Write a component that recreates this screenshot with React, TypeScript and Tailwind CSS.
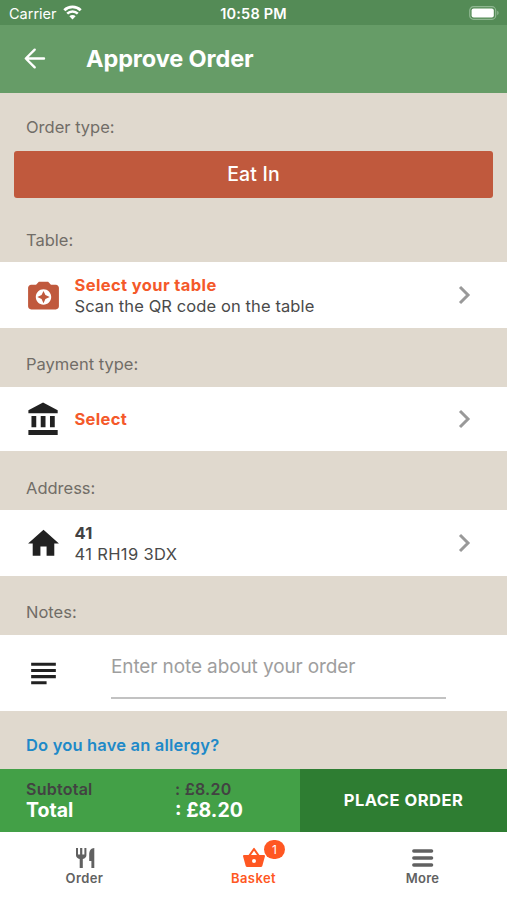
import type { ReactNode } from "react";
import { MdCameraEnhance, MdHome, MdSubject } from "react-icons/md";

function StatusBar() {
    return (
        <div className="relative flex h-[25px] items-center justify-between bg-[#548b56] pl-[9px] pr-[7px] pt-[2px] text-white">
            <div className="flex items-center gap-[6px]">
                <span className="text-[14.5px] leading-5">Carrier</span>
                <svg width="19" height="15" viewBox="0 0 19 15" fill="none" className="mb-[2px]">
                    <path d="M1.3 5.2a11.7 11.7 0 0 1 16.4 0" stroke="white" strokeWidth="2.8" />
                    <path d="M4.2 8.6a7.6 7.6 0 0 1 10.6 0" stroke="white" strokeWidth="2.6" />
                    <path d="M9.5 14.4 6.4 11.2a4.4 4.4 0 0 1 6.2 0z" fill="white" />
                </svg>
            </div>
            <span className="absolute left-0 w-full text-center text-[14.5px] leading-5 font-semibold tracking-[0.2px]">10:58 PM</span>
            <svg width="31" height="14" viewBox="0 0 31 14" fill="none" className="mb-px">
                <rect x="0.7" y="0.7" width="26" height="12.6" rx="3.8" stroke="#8fb791" strokeWidth="1.2" />
                <rect x="2.6" y="2.5" width="22.2" height="9" rx="2" fill="white" />
                <path d="M28.2 4.8v4.4a2.4 2.4 0 0 0 0-4.4z" fill="#8fb791" />
            </svg>
        </div>
    );
}

function Header() {
    return (
        <header className="flex h-[68px] items-center bg-[#669c67] pl-[24px] text-white">
            <svg width="22" height="21" viewBox="0 0 22 21" fill="none" stroke="white" strokeWidth="2.4" strokeLinecap="round" strokeLinejoin="round" className="mb-[2px]">
                <path d="M20 10.5H2M10.7 1.7 1.8 10.5l8.9 8.8" />
            </svg>
            <h1 className="ml-[40px] text-[23.5px] leading-8 font-bold tracking-[-0.1px]">Approve Order</h1>
        </header>
    );
}

function SectionLabel({ children }: { children: ReactNode }) {
    return <div className="pl-[26px] text-[16.5px] leading-6 text-[#716d67]">{children}</div>;
}

function Chevron() {
    return (
        <svg width="13" height="20" viewBox="0 0 13 20" fill="none" className="ml-auto mr-[36px]">
            <path d="m2 2 8 8-8 8" stroke="#999" strokeWidth="3" />
        </svg>
    );
}

function Row({ icon, children }: { icon: ReactNode; children: ReactNode }) {
    return (
        <div className="flex h-full items-center pl-[25px]">
            <div className="w-[37px] shrink-0">{icon}</div>
            <div className="ml-[12.5px] text-[16.5px] leading-[21px]">{children}</div>
            <Chevron />
        </div>
    );
}

function BankIcon() {
    return (
        <svg width="37" height="37" viewBox="0 0 24 24" fill="#212121">
            <path d="M11.7 1 2.2 6v2h19V6zM4.2 9.8h3.1v7.3H4.2zM10.2 9.8h3.1v7.3h-3.1zM16.2 9.8h3.1v7.3h-3.1zM2.2 18.8h19V22h-19z" />
        </svg>
    );
}

function CutleryIcon() {
    return (
        <svg width="24" height="24" viewBox="0 0 24 24" fill="currentColor">
            <path d="M3 2h2v6.5h2.1V2h2.2v6.5h2.1V2h2v7.2c0 1.9-1.2 3.1-3.6 3.7V22H6.7v-9.1C4.300 12.300 3 11.100 3 9.200z" />
            <path d="M21.300 2v20h-2.900v-7h-2.200V8.500C16.200 4.800 18 2 21.300 2z" />
        </svg>
    );
}

function BasketIcon() {
    return (
        <svg width="24" height="24" viewBox="0 0 24 24" fill="currentColor">
            <path d="M5.5 21c-.78 0-1.46-.45-1.79-1.1L1.1 10.44 1 10a1 1 0 0 1 1-1h4.58l4.6-6.57a1 1 0 0 1 1.65.01L17.42 9H22a1 1 0 0 1 1 1l-.04.29-2.67 9.61c-.33.65-1.01 1.1-1.79 1.1zM12 4.74 9 9h6zM12 13a2 2 0 1 0 0 4 2 2 0 0 0 0-4z" />
        </svg>
    );
}

function TabBar() {
    return (
        <nav className="grid h-[68px] grid-cols-3 bg-white pt-[14px] text-[13px] leading-4 font-semibold text-[#616161]">
            <div className="flex flex-col items-center">
                <CutleryIcon />
                <span className="tracking-[0.4px]">Order</span>
            </div>
            <div className="relative flex flex-col items-center text-[#ff5722]">
                <BasketIcon />
                <span className="tracking-[0.4px]">Basket</span>
                <span className="absolute left-[95px] -top-[6px] flex h-[19px] w-[21px] items-center justify-center rounded-full bg-[#ff5722] text-[12px] font-normal text-white">
                    1
                </span>
            </div>
            <div className="flex flex-col items-center">
                <svg width="24" height="24" viewBox="0 0 24 24" stroke="currentColor" strokeWidth="3.4" strokeLinecap="round">
                    <path d="M2.8 5h17.800M2.8 12h17.800M2.8 19h17.800" />
                </svg>
                <span className="tracking-[0.2px]">More</span>
            </div>
        </nav>
    );
}

export default function App() {
    return (
        <div className="flex h-[900px] w-[507px] flex-col overflow-hidden bg-[#e0d9ce] font-['Inter',sans-serif]">
            <StatusBar />
            <Header />
            <main className="flex h-[676px] flex-col">
                <div className="pt-[22px]">
                    <SectionLabel>Order type:</SectionLabel>
                </div>
                <button className="mx-[14px] mt-3 h-[47px] shrink-0 rounded-[3px] bg-[#c0593d] pt-px text-[19.5px] font-medium tracking-[0.15px] text-white">
                    Eat In
                </button>
                <div className="flex h-[64px] items-center pt-[19px]">
                    <SectionLabel>Table:</SectionLabel>
                </div>
                <div className="h-[66px] bg-white">
                    <Row icon={<MdCameraEnhance size={37} color="#c0593d" />}>
                        <p className="pt-px font-bold tracking-[0.38px] text-[#f4592a]">Select your table</p>
                        <p className="tracking-[0.1px] text-[#4a4a4a]">Scan the QR code on the table</p>
                    </Row>
                </div>
                <div className="flex h-[59px] items-center pt-[13px]">
                    <SectionLabel>Payment type:</SectionLabel>
                </div>
                <div className="h-[64px] bg-white">
                    <Row icon={<BankIcon />}>
                        <p className="font-bold tracking-[0.3px] text-[#f4592a]">Select</p>
                    </Row>
                </div>
                <div className="flex h-[59px] items-center pt-[14px]">
                    <SectionLabel>Address:</SectionLabel>
                </div>
                <div className="h-[66px] bg-white">
                    <Row icon={<MdHome size={37} color="#212121" />}>
                        <p className="pt-px font-bold tracking-[0.3px] text-[#424242]">41</p>
                        <p className="tracking-[0.35px] text-[#4a4a4a]">41 RH19 3DX</p>
                    </Row>
                </div>
                <div className="flex h-[59px] items-center pt-[13px]">
                    <SectionLabel>Notes:</SectionLabel>
                </div>
                <div className="flex h-[76px] items-center bg-white pl-[25px]">
                    <MdSubject size={37} color="#212121" />
                    <input
                        type="text"
                        placeholder="Enter note about your order"
                        className="ml-[49px] mt-px h-[50px] w-[335px] border-b-2 border-[#c2c2c2] pb-[12px] text-[19px] tracking-[-0.11px] placeholder:text-[#9e9e9e]"
                    />
                </div>
                <a href="#" className="pl-[26px] pt-[22px] text-[16.5px] leading-6 font-semibold tracking-[0.18px] text-[#2089c8]">
                    Do you have an allergy?
                </a>
            </main>
            <div className="flex h-[63px] shrink-0">
                <div className="w-[300px] bg-[#43a047] pl-[26px] pt-[10px]">
                    <div className="flex text-[16px] leading-[21px] font-semibold tracking-[0.25px] text-[#424242]">
                        <span className="w-[149px]">Subtotal</span>
                        <span>: £8.20</span>
                    </div>
                    <div className="flex text-[19.5px] leading-[21px] font-bold text-white">
                        <span className="w-[149px]">Total</span>
                        <span>: £8.20</span>
                    </div>
                </div>
                <button className="flex-1 bg-[#2e7d32] text-[16.5px] font-bold tracking-[0.5px] text-white">PLACE ORDER</button>
            </div>
            <TabBar />
        </div>
    );
}
